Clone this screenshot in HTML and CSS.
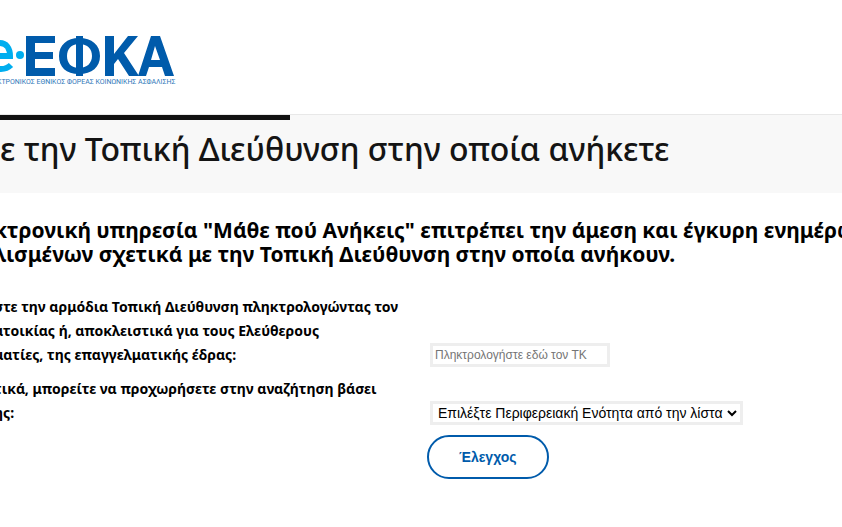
FILE: index.html
```
<!DOCTYPE html>
<html lang="el">

<head>
    <meta charset="UTF-8">
    <meta name="viewport" content="width=device-width, initial-scale=1.0">
    <title>e-ΕΦΚΑ</title>
    <link rel="stylesheet" href="styles.css">
</head>

<body>

    <header class="site-header">
        <a href="#" class="logo" aria-label="e-ΕΦΚΑ">
            <svg width="176" height="56" viewBox="0 0 176 56">
                <path d="M-8 28H10C10 20 6 15 0 15C-9 15 -12 21 -12 27C-12 35 -7 41 1 41C5 41 9 39 11 37" fill="none" stroke="#00aeef" stroke-width="6" />
                <circle cx="20" cy="27" r="4" fill="#00aeef" />
                <path fill="#005bab" d="M26 8H55V15H35V24H53V31H35V40H55V48H26ZM76 8H83V48H76ZM105 8H114V26L128 8H138L124 25L139 48H129L118 31L114 36V48H105Z" />
                <path fill="#005bab" fill-rule="evenodd" d="M79 10C92 10 100 17 100 28S92 46 79 46S59 39 59 28S67 10 79 10ZM79 16C71 16 67 21 67 28S71 40 79 40S92 35 92 28S88 16 79 16ZM151 8H160L174 48H165L162 39H149L146 48H138ZM155 18L151 32H160Z" />
                <text class="logo-text" x="-3" y="56">ΚΤΡΟΝΙΚΟΣ ΕΘΝΙΚΟΣ ΦΟΡΕΑΣ ΚΟΙΝΩΝΙΚΗΣ ΑΣΦΑΛΙΣΗΣ</text>
            </svg>
        </a>
    </header>

    <div class="title-bar">
        <h1>ε την Τοπική Διεύθυνση στην οποία ανήκετε</h1>
    </div>

    <main class="content">
        <h2>κτρονική υπηρεσία "Μάθε πού Ανήκεις" επιτρέπει την άμεση και έγκυρη ενημέρω<br>λισμένων σχετικά με την Τοπική Διεύθυνση στην οποία ανήκουν.</h2>

        <form class="search-form">
            <div class="form-row">
                <label for="postcode">στε την αρμόδια Τοπική Διεύθυνση πληκτρολογώντας τον<br>ατοικίας ή, αποκλειστικά για τους Ελεύθερους<br>ματίες, της επαγγελματικής έδρας:</label>
                <input type="text" id="postcode" name="postcode" placeholder="Πληκτρολογήστε εδώ τον ΤΚ">
            </div>
            <div class="form-row">
                <label for="region">τικά, μπορείτε να προχωρήσετε στην αναζήτηση βάσει<br>ης:</label>
                <select id="region" name="region">
                    <option>Επιλέξτε Περιφερειακή Ενότητα από την λίστα</option>
                </select>
            </div>
            <div class="form-actions">
                <button type="submit">Έλεγχος</button>
            </div>
        </form>
    </main>

</body>

</html>
```
FILE: styles.css
```
* {
    box-sizing: border-box;
}

body {
    margin: 0;
    font-family: "Noto Sans", sans-serif;
    color: #000000;
    background-color: #ffffff;
    overflow-x: hidden;
}

.site-header {
    padding: 28px 0 30px;
}

.logo {
    display: block;
}

.logo svg {
    display: block;
    overflow: visible;
}

.logo-text {
    font-family: Roboto, sans-serif;
    font-size: 7px;
    fill: #2f78b9;
}

.title-bar {
    border-top: 1px solid #e8e8e8;
    background-color: #f8f8f8;
    padding-bottom: 20px;
}

.title-bar::before {
    content: "";
    display: block;
    width: 290px;
    height: 5px;
    background-color: #111111;
}

.title-bar h1 {
    margin: 0;
    padding-top: 5px;
    font-size: 32px;
    line-height: 48px;
    font-weight: 500;
    color: #141414;
    white-space: nowrap;
}

.content {
    margin-left: -6px;
    padding-top: 25px;
}

.content h2 {
    margin: 0 0 29px;
    font-size: 21px;
    line-height: 24px;
    font-weight: 700;
    white-space: nowrap;
}

.form-row {
    display: grid;
    grid-template-columns: 436px 1fr;
    align-items: end;
    justify-items: start;
    margin-bottom: 10px;
}

.form-row label {
    font-size: 14px;
    line-height: 24px;
    font-weight: 700;
    white-space: nowrap;
}

.form-row input,
.form-row select {
    height: 24px;
    border: 3px solid #eeeeee;
    border-radius: 0;
    background-color: #ffffff;
    font-family: "Liberation Sans", Arial, sans-serif;
}

.form-row input {
    width: 180px;
    padding: 1px 2px;
    font-size: 12px;
}

.form-row select {
    padding: 0 1px;
    font-size: 14px;
    color: #000000;
}

.form-actions {
    padding-left: 433px;
}

.form-actions button {
    padding: 12px 30px;
    border: 2px solid #005bab;
    border-radius: 22px;
    background-color: #ffffff;
    color: #005bab;
    font-family: "Liberation Sans", Arial, sans-serif;
    font-size: 14px;
    line-height: 16px;
    font-weight: bold;
}
```
